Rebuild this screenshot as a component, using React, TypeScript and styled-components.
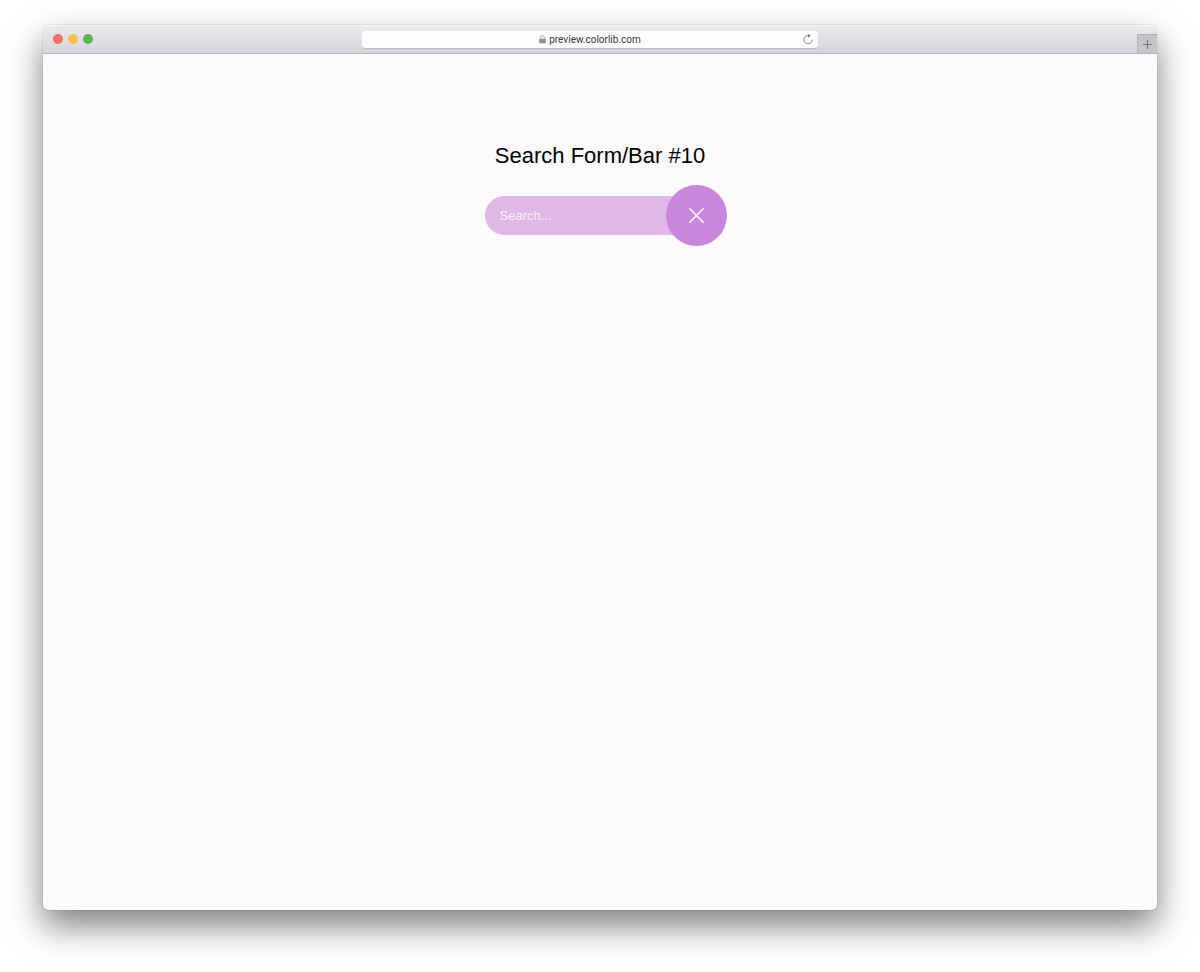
import React, { useState } from "react";
import styled, { createGlobalStyle } from "styled-components";

const GlobalStyle = createGlobalStyle`
  * { box-sizing: border-box; }
  body {
    margin: 0;
    background: #fff;
    font-family: "Liberation Sans", Arial, sans-serif;
  }
`;

const Desktop = styled.div`
  display: flex;
  min-height: 100vh;
  padding: 25px 43px 62px;
`;

const Window = styled.div`
  flex: 1;
  display: flex;
  flex-direction: column;
  min-width: 0;
  border-radius: 5px;
  background: #fcfafd;
  box-shadow: 0 0 1px rgba(0, 0, 0, 0.5), 0 16px 34px rgba(0, 0, 0, 0.5);
`;

const TitleBar = styled.header`
  display: flex;
  height: 29px;
  border-radius: 5px 5px 0 0;
  border-bottom: 1px solid #b6b3b7;
  background: linear-gradient(#edebee, #d6d4d8);
  box-shadow: inset 0 1px 0 #f5f4f6;
`;

const Toolbar = styled.div`
  flex: 1;
  display: grid;
  grid-template-columns: 7fr 10fr 7fr;
  align-items: center;
`;

const Lights = styled.div`
  display: flex;
  gap: 5px;
  padding-left: 10px;
`;

const Light = styled.button<{ $color: string }>`
  width: 10px;
  height: 10px;
  padding: 0;
  border: 0;
  border-radius: 50%;
  background: ${(p) => p.$color};
`;

const AddressBar = styled.div`
  display: grid;
  grid-template-columns: 20px 1fr 20px;
  align-items: center;
  height: 17px;
  border-radius: 3px;
  background: #fdfcfe;
  box-shadow: 0 1px 1px rgba(0, 0, 0, 0.15);
`;

const Address = styled.div`
  grid-column: 2;
  display: flex;
  align-items: center;
  justify-content: center;
  gap: 3px;
  color: #39373a;
  font: 10px/18px Roboto, sans-serif;
`;

const ReloadButton = styled.button`
  display: flex;
  justify-content: center;
  padding: 0;
  border: 0;
  background: none;
`;

const NewTabButton = styled.button`
  display: flex;
  align-items: center;
  justify-content: center;
  align-self: flex-end;
  width: 20px;
  height: 19px;
  padding: 0;
  border: 1px solid #b3b0b4;
  border-width: 1px 0 0 1px;
  background: #c6c4c8;
`;

const Page = styled.main`
  display: flex;
  flex-direction: column;
  align-items: center;
  padding-top: 88px;
`;

const Title = styled.h1`
  margin: 0;
  color: #000;
  font-size: 22px;
  font-weight: 400;
  line-height: 28px;
`;

const SearchForm = styled.form`
  display: flex;
  align-items: center;
  margin-top: 15px;
`;

const SearchField = styled.input`
  width: 231px;
  height: 39px;
  padding: 0 60px 0 15px;
  border: 0;
  border-radius: 20px;
  outline: 0;
  background: #e0b8e7;
  color: #fff;
  font: 13px "Liberation Sans", Arial, sans-serif;

  &::placeholder {
    color: #f8ebfa;
    opacity: 1;
  }
`;

const ClearButton = styled.button`
  display: flex;
  align-items: center;
  justify-content: center;
  width: 61px;
  height: 61px;
  margin: 0 -11px 0 -50px;
  padding: 0;
  border: 0;
  border-radius: 50%;
  background: #ca86da;
`;

export default function App() {
  const [query, setQuery] = useState("");

  return (
    <>
      <GlobalStyle />
      <Desktop>
        <Window>
          <TitleBar>
            <Toolbar>
              <Lights>
                <Light $color="#f4705f" aria-label="Close window" />
                <Light $color="#fbbd54" aria-label="Minimize window" />
                <Light $color="#5bb555" aria-label="Zoom window" />
              </Lights>
              <AddressBar>
                <Address>
                  <svg width="7" height="9" viewBox="0 0 7 9" aria-hidden="true">
                    <path d="M1.6 4V2.3a1.9 1.7 0 0 1 3.8 0V4" fill="none" stroke="#a3a1a5" strokeWidth="0.9" />
                    <rect x="0.2" y="3.8" width="6.6" height="4.4" rx="0.5" fill="#929094" />
                  </svg>
                  <span>preview.colorlib.com</span>
                </Address>
                <ReloadButton aria-label="Reload">
                  <svg width="10" height="11" viewBox="0 0 10 11" aria-hidden="true">
                    <path d="M5.2 1.5A4.1 4.1 0 1 0 9.1 5.6" fill="none" stroke="#7c7a7e" strokeWidth="0.9" />
                    <path d="M5 0L7.8 1.8L5 3.6Z" fill="#6f6d71" />
                  </svg>
                </ReloadButton>
              </AddressBar>
            </Toolbar>
            <NewTabButton aria-label="New tab">
              <svg width="9" height="9" viewBox="0 0 9 9" aria-hidden="true">
                <path d="M4.5 0v9M0 4.5h9" stroke="#77757a" />
              </svg>
            </NewTabButton>
          </TitleBar>
          <Page>
            <Title>Search Form/Bar #10</Title>
            <SearchForm onSubmit={(e) => e.preventDefault()}>
              <SearchField
                type="text"
                aria-label="Search"
                placeholder="Search..."
                value={query}
                onChange={(e) => setQuery(e.target.value)}
              />
              <ClearButton type="button" aria-label="Clear search" onClick={() => setQuery("")}>
                <svg width="15" height="15" viewBox="0 0 15 15" aria-hidden="true">
                  <path
                    d="M0.8 0.8L14.2 14.2M14.2 0.8L0.8 14.2"
                    stroke="#fff"
                    strokeWidth="1.5"
                    strokeLinecap="round"
                  />
                </svg>
              </ClearButton>
            </SearchForm>
          </Page>
        </Window>
      </Desktop>
    </>
  );
}
